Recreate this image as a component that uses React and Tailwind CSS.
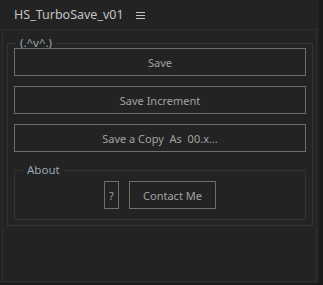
export default function App() {
  const font = { fontFamily: '"Noto Sans", "Open Sans", sans-serif' };
  const btn =
    "h-[28px] border border-[#6e6e6e] bg-[#232323] text-[11px] text-[#a2a2a2] flex items-center justify-center leading-none";
  return (
    <div className="w-[323px] h-[285px] bg-[#1b1b1b]" style={font}>
      <div className="w-[319px] h-[283px] bg-[#232323] flex flex-col">
        <div className="h-[29px] shrink-0 flex items-center pl-[14px] gap-[12px] pt-[1px]">
          <span className="text-[12.5px] text-[#c4c4c4] leading-none">HS_TurboSave_v01</span>
          <svg width="9" height="7" viewBox="0 0 9 7" className="mt-[1px]">
            <rect x="0" y="0" width="9" height="1" fill="#c4c4c4" />
            <rect x="0" y="3" width="9" height="1" fill="#c4c4c4" />
            <rect x="0" y="6" width="9" height="1" fill="#c4c4c4" />
          </svg>
        </div>
        <div className="ml-[2px] w-[315px] h-[253px] border border-[#2f2f2f] pl-[4px] pr-[3px] pt-[8px]">
          <fieldset className="border border-[#343434] px-[6px] pb-[5px]">
            <legend className="ml-[2px] px-[4px] text-[11.5px] leading-[10px] text-[#9aa6b2]">(.^v^.)</legend>
            <div className="flex flex-col gap-[10px]">
              <button className={btn}>Save</button>
              <button className={btn}>Save Increment</button>
              <button className={btn}>Save a Copy&nbsp; As&nbsp; 00.x...</button>
            </div>
            <fieldset className="mt-[13px] border border-[#343434] pt-[6px] pb-[10px]">
              <legend className="ml-[8px] px-[4px] text-[11.5px] leading-[10px] text-[#9aa6b2]">About</legend>
              <div className="flex justify-center gap-[10px]">
                <button className={btn + " w-[15px]"}>?</button>
                <button className={btn + " w-[87px]"}>Contact Me</button>
              </div>
            </fieldset>
          </fieldset>
        </div>
      </div>
    </div>
  );
}
